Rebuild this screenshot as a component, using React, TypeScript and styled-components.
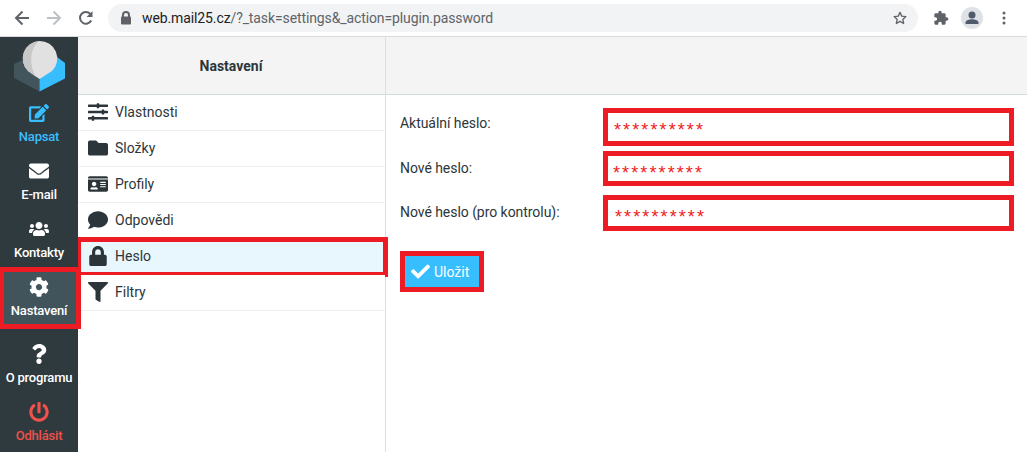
import React from "react";
import styled, { createGlobalStyle } from "styled-components";
import { FaEnvelope, FaUsers, FaCog, FaQuestion, FaPowerOff, FaEdit, FaSlidersH, FaFolder, FaIdCard, FaComment, FaLock, FaFilter, FaCheck } from "react-icons/fa";

const Global = createGlobalStyle`
  html, body { margin: 0; padding: 0; background: #fff; }
  body { font-family: Roboto, "Liberation Sans", sans-serif; color: #2c363a; }
  #root { width: 1027px; height: 452px; overflow: hidden; }
`;

const Page = styled.div`
  width: 1027px; height: 452px; display: flex; flex-direction: column; background: #fff;
`;
const BrowserBar = styled.header`
  height: 36px; flex: none; display: flex; align-items: center; background: #fff;
  border-bottom: 1px solid #d8dadc; padding: 0 0 0 8px;
`;
const NavButton = styled.button`
  width: 28px; height: 28px; margin-right: 4px; padding: 0; border: 0; background: none;
  display: flex; align-items: center; justify-content: center; flex: none;
  svg { display: block; }
`;
const Omnibox = styled.div`
  width: 810px; height: 28px; margin-left: 4px; border-radius: 14px; background: #f1f3f4; flex: none;
  display: flex; align-items: center; padding: 0 10px 0 12px; box-sizing: border-box;
`;
const Url = styled.div`
  flex: 1; margin-left: 10px; font-size: 14px; letter-spacing: -0.11px; color: #5f6368; white-space: nowrap;
  b { font-weight: 400; color: #202124; }
`;
const ChromeTools = styled.div`
  display: flex; align-items: center; margin-left: 8px;
`;
const ToolSlot = styled.div<{ $w: number }>`
  width: ${p => p.$w}px; display: flex; align-items: center; justify-content: center; flex: none;
`;

const Body = styled.div`
  flex: 1; display: flex; min-height: 0;
`;
const Sidebar = styled.nav`
  width: 78px; flex: none; background: #2f3a3f; display: flex; flex-direction: column; position: relative; z-index: 2;
`;
const LogoBox = styled.div`
  height: 58px; flex: none; overflow: hidden;
  svg { display: block; }
`;
const NavItem = styled.div<{ $color?: string; $active?: boolean }>`
  height: 58px; flex: none; position: relative; display: flex; flex-direction: column; align-items: center;
  color: ${p => p.$color || "#fff"}; font-size: 13px; font-weight: 500; letter-spacing: -0.2px; line-height: 15px;
  background: ${p => (p.$active ? "#41535b" : "transparent")};
  &[data-first] { margin-top: auto; }
`;
const NavIcon = styled.div`
  height: 20px; margin-top: 8px; display: flex; align-items: center; justify-content: center;
  font-size: 20px;
`;
const NavLabel = styled.div`
  margin-top: 6px; white-space: nowrap;
`;
const NavFrame = styled.div`
  position: absolute; left: 0; top: -2px; width: 81px; height: 62px; box-sizing: border-box;
  border: 5px solid #ed1c24; border-left-width: 4px; pointer-events: none;
`;

const ListColumn = styled.section`
  width: 308px; flex: none; display: flex; flex-direction: column; border-right: 1px solid #dcdfe1; box-sizing: border-box;
`;
const ColumnHeader = styled.div`
  height: 58px; flex: none; box-sizing: border-box; background: #f4f4f4; border-bottom: 1px solid #d4dbde;
  display: flex; align-items: center; justify-content: center; font-size: 14px; font-weight: 700; color: #2c363a;
  padding-right: 1px;
`;
const Row = styled.div<{ $selected?: boolean }>`
  height: 36px; flex: none; box-sizing: border-box; display: flex; align-items: center; position: relative;
  border-bottom: 1px solid #f0f0f0; padding: 0 0 2px 10px; font-size: 14px; line-height: 16px;
  background: ${p => (p.$selected ? "#e8f6fd" : "#fff")};
`;
const RowIcon = styled.div`
  width: 20px; height: 20px; margin-right: 7px; flex: none; display: flex; align-items: center; justify-content: center;
  color: #2c363a; font-size: 20px;
`;
const RowFrame = styled.div`
  position: absolute; left: -2px; right: -3px; top: -2px; bottom: -3px; box-sizing: border-box;
  border: 5px solid #ed1c24; pointer-events: none;
`;

const Content = styled.main`
  flex: 1; display: flex; flex-direction: column; min-width: 0;
`;
const Toolbar = styled.div`
  height: 58px; flex: none; box-sizing: border-box; background: #f4f4f4; border-bottom: 1px solid #d4dbde;
`;
const Form = styled.form`
  padding: 13px 0 0 14px; display: flex; flex-direction: column;
`;
const FormRow = styled.div<{ $h: number; $after: number; $top: number }>`
  display: grid; grid-template-columns: 203px 411px; height: ${p => p.$h}px; margin-bottom: ${p => p.$after}px;
  label { font-size: 14px; line-height: 16px; letter-spacing: -0.05px; padding-top: ${p => p.$top}px; white-space: nowrap; }
`;
const Field = styled.div<{ $x: number; $y: number }>`
  box-sizing: border-box; border: 5px solid #ed1c24; background: #fff; color: #ed1c24;
  padding: ${p => p.$y}px 0 0 ${p => p.$x}px;
  font-family: "Liberation Sans", sans-serif; font-size: 18px; line-height: 20px; letter-spacing: 2.1px; font-weight: 400;
  overflow: hidden;
`;
const SaveFrame = styled.div`
  width: 84px; height: 41px; box-sizing: border-box; border: 5px solid #ed1c24; margin-top: 20px; background: #37beff;
`;
const SaveButton = styled.button`
  width: 74px; height: 31px; padding: 0 0 0 6px; border: 0; background: #37beff; color: #fff; display: flex; align-items: center;
  font-family: Roboto, sans-serif; font-size: 14px; font-weight: 400;
  svg { margin-right: 4px; }
`;

const Stroke = { fill: "none", strokeWidth: 2 } as const;

function Logo() {
  return (
    <svg width="78" height="58" viewBox="0 37 78 58" aria-hidden="true">
      <path d="M14 64 L24 59 L39 60 L39.500 91.500 L14 78 Z" fill="#42545c" />
      <path d="M39.500 60 L57 57 L65 63 L65 78.500 L39.500 91.500 Z" fill="#37beff" />
      <path d="M39.500 41 A17.500 17.500 0 0 1 52 71 L39.500 79 L28 71 A17.500 17.500 0 0 1 39.500 41 Z" fill="#e1e1e1" />
      <path d="M39 41 A17.500 17.500 0 0 0 28 71 L37 77.500 C30 70 28 50 39 41 Z" fill="#c8c8c8" />
    </svg>
  );
}

const items = [
  { l: "Napsat", i: <FaEdit />, c: "#37beff" },
  { l: "E-mail", i: <FaEnvelope /> },
  { l: "Kontakty", i: <FaUsers /> },
];

const rows = [
  { l: "Vlastnosti", i: <FaSlidersH /> },
  { l: "Složky", i: <FaFolder /> },
  { l: "Profily", i: <FaIdCard /> },
  { l: "Odpovědi", i: <FaComment /> },
  { l: "Heslo", i: <FaLock />, s: true },
  { l: "Filtry", i: <FaFilter /> },
];

const fields = [
  { l: "Aktuální heslo:", h: 38, a: 5, t: 7, x: 6, y: 7 },
  { l: "Nové heslo:", h: 35, a: 9, t: 9, x: 5, y: 7 },
  { l: "Nové heslo (pro kontrolu):", h: 36, a: 0, t: 9, x: 7, y: 7 },
];

export default function App() {
  return (
    <Page>
      <Global />
      <BrowserBar>
        <NavButton aria-label="Zpět">
          <svg width="16" height="16" viewBox="0 0 16 16"><path d="M15 8H2.500M8.500 1.500 2 8l6.500 6.500" {...Stroke} stroke="#5f6368" /></svg>
        </NavButton>
        <NavButton aria-label="Vpřed">
          <svg width="16" height="16" viewBox="0 0 16 16"><path d="M1 8h12.500M7.500 1.500 14 8l-6.500 6.500" {...Stroke} stroke="#bdc1c6" /></svg>
        </NavButton>
        <NavButton aria-label="Obnovit">
          <svg width="16" height="16" viewBox="0 0 16 16"><path d="M13.200 10.500A5.900 5.900 0 1 1 12.300 3.900" {...Stroke} stroke="#5f6368" /><path d="M14.500 1v6h-6z" fill="#5f6368" /></svg>
        </NavButton>
        <Omnibox>
          <svg width="12" height="14" viewBox="0 0 12 14"><path d="M3 6V4a3 3 0 0 1 6 0v2" {...Stroke} stroke="#5f6368" /><rect x="1" y="5.500" width="10" height="8" rx="1" fill="#5f6368" /></svg>
          <Url><b>web.mail25.cz</b>/?_task=settings&amp;_action=plugin.password</Url>
          <svg width="16" height="16" viewBox="0 0 24 24"><path d="M12 3.500l2.600 5.700 6.200.7-4.600 4.200 1.300 6.100L12 17.100l-5.500 3.100 1.300-6.100-4.600-4.200 6.200-.7z" fill="none" stroke="#5f6368" strokeWidth="2" strokeLinejoin="round" /></svg>
        </Omnibox>
        <ChromeTools>
          <ToolSlot $w={29}>
            <svg width="16" height="16" viewBox="0 0 24 24"><path d="M20.500 11H19V7a2 2 0 0 0-2-2h-4V3.500a2.500 2.500 0 0 0-5 0V5H4a2 2 0 0 0-2 2v3.800h1.500a2.700 2.700 0 0 1 0 5.400H2V20a2 2 0 0 0 2 2h3.800v-1.500a2.700 2.700 0 0 1 5.400 0V22H17a2 2 0 0 0 2-2v-4h1.500a2.500 2.500 0 0 0 0-5z" fill="#5f6368" /></svg>
          </ToolSlot>
          <ToolSlot $w={34}>
            <svg width="22" height="22" viewBox="0 0 22 22"><circle cx="11" cy="11" r="11" fill="#dee1e6" /><circle cx="11" cy="8" r="3.500" fill="#4f5b6b" /><path d="M4.500 17v-1.500c0-2 4-3.200 6.500-3.200s6.500 1.200 6.500 3.200V17z" fill="#4f5b6b" /></svg>
          </ToolSlot>
          <ToolSlot $w={29}>
            <svg width="4" height="14" viewBox="0 0 4 14"><circle cx="2" cy="2" r="1.500" fill="#5f6368" /><circle cx="2" cy="7" r="1.500" fill="#5f6368" /><circle cx="2" cy="12" r="1.500" fill="#5f6368" /></svg>
          </ToolSlot>
        </ChromeTools>
      </BrowserBar>
      <Body>
        <Sidebar>
          <LogoBox><Logo /></LogoBox>
          {items.map(it => (
            <NavItem key={it.l} $color={it.c}>
              <NavIcon>{it.i}</NavIcon>
              <NavLabel>{it.l}</NavLabel>
            </NavItem>
          ))}
          <NavItem $active>
            <NavIcon><FaCog /></NavIcon>
            <NavLabel>Nastavení</NavLabel>
            <NavFrame />
          </NavItem>
          <NavItem data-first>
            <NavIcon><FaQuestion /></NavIcon>
            <NavLabel>O programu</NavLabel>
          </NavItem>
          <NavItem $color="#f0514b">
            <NavIcon><FaPowerOff /></NavIcon>
            <NavLabel>Odhlásit</NavLabel>
          </NavItem>
        </Sidebar>
        <ListColumn>
          <ColumnHeader>Nastavení</ColumnHeader>
          {rows.map(r => (
            <Row key={r.l} $selected={r.s}>
              <RowIcon>{r.i}</RowIcon>
              {r.l}
              {r.s && <RowFrame />}
            </Row>
          ))}
        </ListColumn>
        <Content>
          <Toolbar />
          <Form>
            {fields.map(f => (
              <FormRow key={f.l} $h={f.h} $after={f.a} $top={f.t}>
                <label>{f.l}</label>
                <Field $x={f.x} $y={f.y}>**********</Field>
              </FormRow>
            ))}
            <SaveFrame>
              <SaveButton type="button"><FaCheck size={19} />Uložit</SaveButton>
            </SaveFrame>
          </Form>
        </Content>
      </Body>
    </Page>
  );
}
